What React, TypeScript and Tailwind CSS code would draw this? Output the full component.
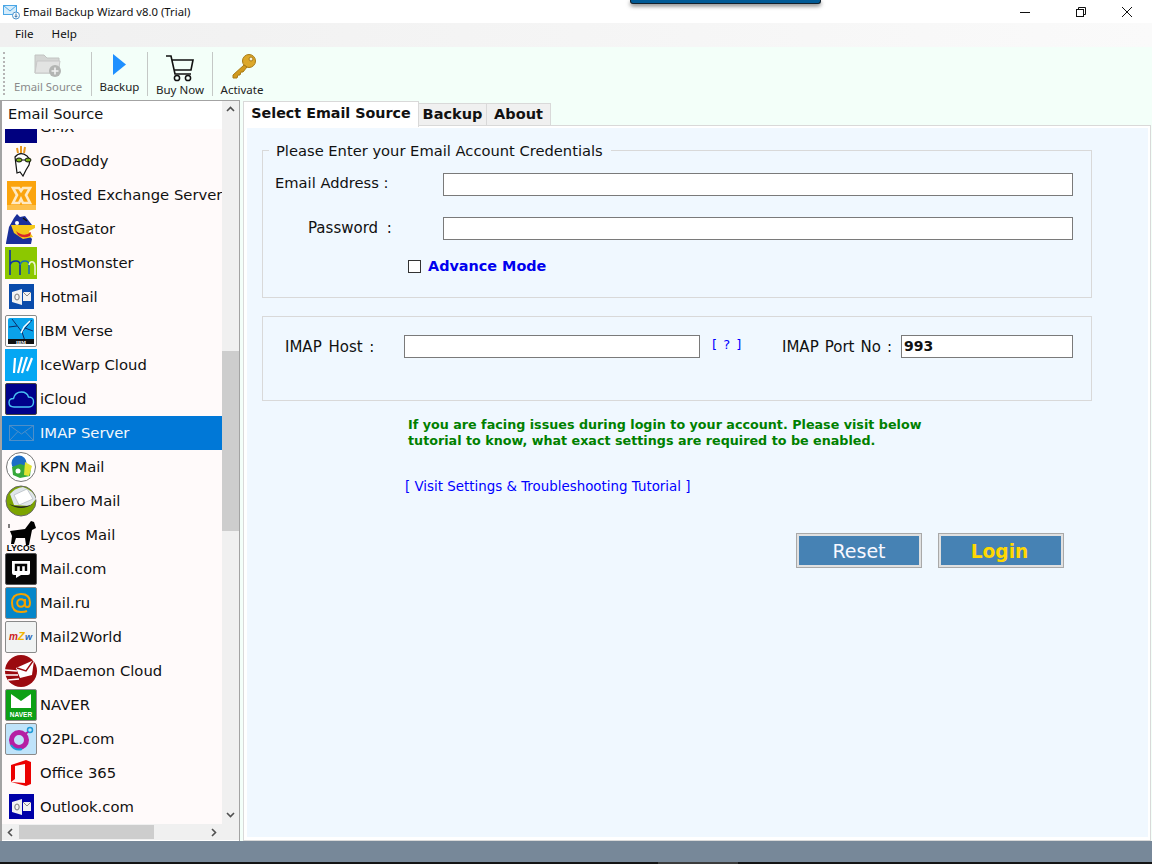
import React from "react";

const Box = ({ bg, children, border }: { bg: string; children?: React.ReactNode; border?: string }) => (
  <svg width="32" height="32" viewBox="0 0 32 32" className="block">
    <rect x="0.5" y="0.5" width="31" height="31" rx="1.5" fill={bg} stroke={border || "#8a8a8a"} />
    {children}
  </svg>
);
const Plain = ({ children }: { children?: React.ReactNode }) => (
  <svg width="32" height="32" viewBox="0 0 32 32" className="block">{children}</svg>
);
const OutlookIcon = ({ bg }: { bg: string }) => (
  <Plain>
    <rect x="4" y="3" width="25" height="25" fill={bg} />
    <path d="M7 11 L17 8 V24 L7 21Z" fill="#f2f2f2" />
    <path d="M18 11 H26 V20 H18Z" fill="#f2f2f2" />
    <path d="M18 11 L22 15 L26 11" fill="none" stroke="#8a8a8a" />
    <ellipse cx="12" cy="16" rx="2.2" ry="3" fill="none" stroke="#777" />
  </Plain>
);

const icons: Record<string, React.ReactNode> = {
  GMX: <Plain><rect x="0" y="0" width="32" height="32" fill="#00007f" /></Plain>,
  GoDaddy: (
    <Plain>
      <path d="M12 3 l1 5 M16 1 l0 7 M20 2 l-1 6" stroke="#e8971f" strokeWidth="2" fill="none" />
      <path d="M10 12 Q15 6 22 11 L25 15 L24 20 L21 25 L18 31 L15 27 L12 28 Q11 20 10 12Z" fill="#fff" stroke="#111" strokeWidth="1.2" />
      <ellipse cx="14" cy="15" rx="3" ry="2" fill="#7fb51d" stroke="#111" />
      <ellipse cx="23" cy="15" rx="3" ry="2" fill="#7fb51d" stroke="#111" />
      <path d="M17 15 H20" stroke="#111" />
    </Plain>
  ),
  Hosted: (
    <Plain>
      <rect x="2" y="2" width="29" height="29" fill="#fba40e" />
      <rect x="2" y="26" width="29" height="5" fill="#fdc04c" />
      <path d="M8 9 L14 9 L16 12 L18 9 L25 9 L21 16 L25 24 L18 24 L16 20 L14 24 L8 24 L12 16Z" fill="none" stroke="#ffe9c2" strokeWidth="2.6" />
    </Plain>
  ),
  HostGator: (
    <Plain>
      <path d="M1 30 L4 14 L9 5 L12 1 L15 4 L20 3 L27 12 L22 20 L27 26 L26 31 L1 31Z" fill="#1a2f9a" />
      <path d="M6 12 L30 12 L30 15 L24 18 L28 24 L18 26 L9 20Z" fill="#f4c81a" />
      <path d="M11 18 Q19 25 26 19 L25 23 Q18 26 13 22Z" fill="#d8262c" />
      <circle cx="12" cy="10" r="2" fill="#fff" />
      <path d="M18 5 L22 8" stroke="#111" strokeWidth="1.5" />
    </Plain>
  ),
  HostMonster: (
    <svg width="32" height="32" viewBox="0 0 32 32" className="block">
      <rect width="32" height="32" fill="#8cc800" />
      <path d="M5 3 V28 M5 18 Q6 14 11 14 Q15 14 15 18 V28" stroke="#0b2fa8" strokeWidth="1.6" fill="none" />
      <path d="M15 18 Q16 14 20 14 Q24 14 24 18 V27 M15 28 H15" stroke="#1c6fb5" strokeWidth="1.6" fill="none" />
      <path d="M24 18 Q25 14 28 15 Q30 16 30 20 V28" stroke="#eaf5cf" strokeWidth="1.6" fill="none" />
    </svg>
  ),
  Hotmail: <OutlookIcon bg="#0a4bab" />,
  IBM: (
    <Box bg="#fff">
      <rect x="3" y="3" width="26" height="26" rx="2" fill="#0aa2ea" />
      <path d="M7 4 L17 17 L21 29 M17 17 L27 5 M4 12 L12 11 M20 13 L28 16" stroke="#0d2a66" strokeWidth="1" fill="none" />
      <path d="M16 18 L19 12 L25 6" stroke="#fff" strokeWidth="1.4" fill="none" />
      <rect x="3" y="24" width="26" height="5" fill="#111" />
      <text x="16" y="28.5" fontSize="5" fill="#fff" textAnchor="middle" fontWeight="bold" fontFamily="Liberation Serif, serif">IBM</text>
    </Box>
  ),
  IceWarp: (
    <svg width="32" height="32" viewBox="0 0 32 32" className="block">
      <rect width="32" height="32" fill="#05a7f3" />
      <path d="M10 9 L9 24 M17 8 L13 24 M22 8 L17 24 M27 9 L22 22" stroke="#fff" strokeWidth="2.2" fill="none" />
    </svg>
  ),
  iCloud: (
    <Box bg="#00008b" border="#444">
      <path d="M9 24 Q4 24 4 19.5 Q4 15.5 8.5 15.5 Q10 9 16.5 9 Q22 9 23.5 14 Q29 14 28.5 19.5 Q28 24 24 24Z" fill="none" stroke="#49c1f3" strokeWidth="1.4" />
    </Box>
  ),
  IMAP: (
    <Plain>
      <rect x="4.5" y="8.5" width="24" height="15" fill="none" stroke="#4d8fc9" />
      <path d="M4.5 8.5 L16.5 17 L28.5 8.5 M4.5 23.5 L13 14.5 M28.5 23.5 L20 14.5" fill="none" stroke="#4d8fc9" />
    </Plain>
  ),
  KPN: (
    <Plain>
      <circle cx="16" cy="16" r="14.5" fill="#fff" stroke="#777" />
      <circle cx="14" cy="12" r="7.5" fill="#1c6ec7" />
      <path d="M7 16 L15 13 L26 16 L25 25 L15 27 L8 24Z" fill="#36a93a" />
      <path d="M20 11 L27 15 L24 25 L19 24Z" fill="#dfe334" />
      <circle cx="13" cy="20" r="2.5" fill="#fff" />
    </Plain>
  ),
  Libero: (
    <Plain>
      <circle cx="16" cy="16" r="15" fill="#7ca400" stroke="#666" />
      <path d="M5 9 Q10 3 18 2 Q28 5 31 14 L25 21 L9 20Z" fill="#dfe5ea" />
      <path d="M9 10 L22 4 L28 14 L14 20Z" fill="#fff" stroke="#a8afb5" strokeWidth="0.6" />
      <path d="M4 19 Q16 24 28 19 Q16 27 4 19Z" fill="#222" />
    </Plain>
  ),
  Lycos: (
    <Plain>
      <path d="M5 12 L20 10 L26 2 L29 3 L31 9 L27 11 L25 21 L24 26 L21 26 L20 19 L11 19 L9 25 L6 25 L7 17 L5 12Z" fill="#000" />
      <path d="M4 5 L4 9" stroke="#000" />
      <text x="16" y="31.5" fontSize="8.5" fontWeight="bold" textAnchor="middle" fill="#000" fontFamily="Liberation Sans, sans-serif">LYCOS</text>
    </Plain>
  ),
  MailCom: (
    <Box bg="#060606" border="#555">
      <path d="M7 8 H25 V20 Q25 22 23 22 L16 22 L11 25 V22 H9 Q7 22 7 20Z" fill="#fff" />
      <path d="M11 18 V12 H21 V18 M16 12 V18" stroke="#060606" strokeWidth="2.4" fill="none" />
    </Box>
  ),
  MailRu: (
    <Box bg="#0586c9">
      <circle cx="16" cy="16" r="3.8" fill="none" stroke="#f5a300" strokeWidth="2" />
      <path d="M20 12 V18 Q20 20 22.5 20 Q25 20 25 15.5 Q25 7 16 7 Q7 7 7 16 Q7 25 16 25 Q20 25 22 24" fill="none" stroke="#f5a300" strokeWidth="2" />
    </Box>
  ),
  Mail2World: (
    <Box bg="#f1f3f3">
      <text x="4" y="19" fontSize="10" fontStyle="italic" fontWeight="bold" fill="#cc1d1d" fontFamily="Liberation Sans, sans-serif">m</text>
      <text x="13" y="19" fontSize="11" fontStyle="italic" fontWeight="bold" fill="#f0b400" fontFamily="Liberation Sans, sans-serif">Z</text>
      <text x="20" y="19" fontSize="9" fontStyle="italic" fontWeight="bold" fill="#2164b8" fontFamily="Liberation Sans, sans-serif">w</text>
    </Box>
  ),
  MDaemon: (
    <Plain>
      <circle cx="16" cy="16" r="16" fill="#9b0a0f" />
      <path d="M11 13 L29 5 L27 20 L15 23Z" fill="#fff" />
      <path d="M12 13 L21 16 L28 6" fill="none" stroke="#9b0a0f" strokeWidth="1.4" />
      <path d="M0 15 L12 16 M0 20 L13 20 M3 25 L14 24" stroke="#fff" strokeWidth="1.6" />
    </Plain>
  ),
  NAVER: (
    <Box bg="#0da015">
      <rect x="6" y="5" width="20" height="14" fill="#fff" />
      <path d="M6 5 L16 12 L26 5Z" fill="#0da015" />
      <text x="16" y="27.5" fontSize="6.5" fontWeight="bold" fill="#fff" textAnchor="middle" fontFamily="Liberation Sans, sans-serif">NAVER</text>
    </Box>
  ),
  O2PL: (
    <Box bg="#bfe3fa">
      <circle cx="14" cy="17" r="7.5" fill="none" stroke="#b51fa3" strokeWidth="5" />
      <path d="M6 22 Q10 28 17 26" fill="none" stroke="#1e9ad6" strokeWidth="2" />
      <circle cx="25" cy="7" r="2.5" fill="none" stroke="#1e9ad6" strokeWidth="1.5" />
      <path d="M20 11 L23 9" stroke="#b51fa3" strokeWidth="2" />
    </Box>
  ),
  Office: (
    <Plain>
      <path d="M6 8 L21 3 L26 5 V27 L21 29 L6 25 L20 26 V7 L10 9 V22 L6 25Z" fill="#eb0000" />
    </Plain>
  ),
  Outlook: <OutlookIcon bg="#0000a8" />,
};

const rows: [string, string][] = [
  ["GMX", "GMX"], ["GoDaddy", "GoDaddy"], ["Hosted", "Hosted Exchange Server"], ["HostGator", "HostGator"],
  ["HostMonster", "HostMonster"], ["Hotmail", "Hotmail"], ["IBM", "IBM Verse"], ["IceWarp", "IceWarp Cloud"],
  ["iCloud", "iCloud"], ["IMAP", "IMAP Server"], ["KPN", "KPN Mail"], ["Libero", "Libero Mail"],
  ["Lycos", "Lycos Mail"], ["MailCom", "Mail.com"], ["MailRu", "Mail.ru"], ["Mail2World", "Mail2World"],
  ["MDaemon", "MDaemon Cloud"], ["NAVER", "NAVER"], ["O2PL", "O2PL.com"], ["Office", "Office 365"], ["Outlook", "Outlook.com"],
];

const Chevron = ({ d }: { d: string }) => (
  <svg width="9" height="9" viewBox="0 0 9 9" className="block">
    <path d={d} fill="none" stroke="#505050" strokeWidth="1.6" />
  </svg>
);

const ui = "font-['Noto_Sans','Open_Sans',sans-serif]";
const dv = "font-['DejaVu_Sans',Verdana,sans-serif]";

const Sep = () => <div className="w-px h-[44px] bg-[#c4c8c6] self-center" />;

export default function App() {
  return (
    <div className={`relative w-[1152px] h-[864px] overflow-hidden bg-white flex flex-col ${dv}`}>
      <div className="absolute left-[630px] top-0 w-[191px] h-[4px] bg-[#005a96] border-b border-x border-[#12202c] rounded-b-[3px] shadow-[0_2px_4px_rgba(0,0,0,0.55)]" />

      {/* title bar */}
      <div className="h-[23px] bg-white flex items-center shrink-0">
        <svg width="17" height="17" viewBox="0 0 17 17" className="ml-[3px] mt-[-1px]">
          <rect x="0.5" y="2.5" width="13" height="9" fill="#d5ecfb" stroke="#4aa6e6" />
          <path d="M0.5 2.5 L7 8 L13.5 2.5" fill="none" stroke="#4aa6e6" />
          <circle cx="13" cy="12.5" r="3.5" fill="#fff" stroke="#4a90c9" />
          <path d="M13 10.5 V14 M11.5 12.8 L13 14.3 L14.5 12.8" fill="none" stroke="#2b6ea8" />
        </svg>
        <span className={`ml-[3px] mt-[2px] text-[11.3px] text-[#111] ${ui}`}>Email Backup Wizard v8.0 (Trial)</span>
        <div className="ml-auto flex items-center">
          <svg width="12" height="12" viewBox="0 0 12 12" className="mr-[44px]"><path d="M1 6.5 H11" stroke="#111" /></svg>
          <svg width="12" height="12" viewBox="0 0 12 12" className="mr-[34px]">
            <rect x="1.5" y="3.5" width="7" height="7" fill="none" stroke="#111" />
            <path d="M3.5 3.5 V1.5 H10.5 V8.5 H8.5" fill="none" stroke="#111" />
          </svg>
          <svg width="12" height="12" viewBox="0 0 12 12" className="mr-[19px]"><path d="M1 1 L11 11 M11 1 L1 11" stroke="#111" /></svg>
        </div>
      </div>

      {/* menu */}
      <div className={`h-[24px] shrink-0 flex items-center pb-[2px] bg-gradient-to-r from-[#f0f0f0] to-[#fafafa] text-[11.6px] text-[#111] ${ui}`}>
        <span className="ml-[15px]">File</span>
        <span className="ml-[18px]">Help</span>
      </div>

      {/* toolbar */}
      <div className={`h-[53px] shrink-0 flex items-stretch bg-[#f3fff9] text-[11.5px] text-[#222] ${ui}`}>
        <div className="ml-[3px] w-[2px] my-[5px] border-l-2 border-dotted border-[#b5b5b5]" />
        <div className="w-[86px] flex flex-col items-center">
          <svg width="30" height="27" viewBox="0 0 30 27" className="mt-[5px] ml-[2px]">
            <path d="M1 3 H10 L13 6 H25 V21 H1Z" fill="#d4d6d4" stroke="#c2c4c2" />
            <path d="M1 21 L3 9 H26 L24 21Z" fill="#e2e3e2" stroke="#c8c8c8" />
            <circle cx="21" cy="19" r="6" fill="#b3b5b3" />
            <path d="M21 15.5 V22.5 M17.5 19 H24.5" stroke="#f2f2f2" strokeWidth="1.6" />
          </svg>
          <span className="text-[#8a8a8a] text-[11.3px] leading-none mt-[2px]">Email Source</span>
        </div>
        <Sep />
        <div className="w-[55px] flex flex-col items-center">
          <svg width="14" height="21" viewBox="0 0 14 21" className="mt-[7px]"><path d="M0 0 L13 10.5 L0 21Z" fill="#1e90ff" /></svg>
          <span className="leading-none mt-[6px]">Backup</span>
        </div>
        <Sep />
        <div className="w-[64px] flex flex-col items-center">
          <svg width="30" height="27" viewBox="0 0 30 27" className="mt-[8px]">
            <path d="M1 1 H6 L10 19 H26 M7 5 H28 L26 15 H9" fill="none" stroke="#111" strokeWidth="1.6" />
            <circle cx="12" cy="23" r="2.6" fill="none" stroke="#111" strokeWidth="1.5" />
            <circle cx="23" cy="23" r="2.6" fill="none" stroke="#111" strokeWidth="1.5" />
          </svg>
          <span className="leading-none mt-[2px]">Buy Now</span>
        </div>
        <Sep />
        <div className="w-[60px] flex flex-col items-center">
          <svg width="26" height="26" viewBox="0 0 26 26" className="mt-[6px] ml-[1px]">
            <circle cx="18" cy="8" r="6.5" fill="#dca82a" stroke="#a87a14" />
            <circle cx="20" cy="6" r="2" fill="#f6f0d8" stroke="#a87a14" />
            <path d="M13 12 L2 22 L2 25 L6 25 L7 22 L9 22 L10 19 L12 19 L16 14Z" fill="#d19a1e" stroke="#a87a14" />
          </svg>
          <span className="leading-none mt-[5px] -ml-[2px]">Activate</span>
        </div>
      </div>

      {/* main */}
      <div className="flex-1 min-h-0 flex bg-[#f3fff9]">
        {/* sidebar */}
        <div className="w-[240px] shrink-0 h-[741px] flex flex-col bg-white border-t border-l-2 border-r border-[#a3a3a3] pb-px">
          <div className="flex-1 min-h-0 flex">
            <div className="w-[220px] flex flex-col min-h-0">
              <div className="h-[28px] bg-white shrink-0 flex items-center pl-[6px] pb-[2px] text-[14.6px] text-[#111] z-10">Email Source</div>
              <div className="flex-1 min-h-0 overflow-hidden bg-[#fffafa]">
                <div className="-mt-[19px]">
                  {rows.map(([k, label]) => {
                    const sel = k === "IMAP";
                    return (
                      <div key={k} className={`h-[34px] flex items-center whitespace-nowrap overflow-hidden text-[14.8px] ${sel ? "bg-[#0078d7] text-[#f4f8fc]" : "text-[#111]"}`}>
                        <div className="w-[32px] ml-[3px] mr-[3px] shrink-0">{icons[k]}</div>
                        <span>{label}</span>
                      </div>
                    );
                  })}
                </div>
              </div>
            </div>
            <div className="flex-1 bg-[#f0f0f0] flex flex-col items-center">
              <div className="h-[17px] flex items-center justify-center"><Chevron d="M1 6 L4.5 2.5 L8 6" /></div>
              <div className="flex-1 w-full">
                <div className="mt-[233px] h-[180px] w-full bg-[#cdcdcd]" />
              </div>
              <div className="h-[20px] flex items-center justify-center"><Chevron d="M1 3 L4.5 6.5 L8 3" /></div>
            </div>
          </div>
          <div className="h-[16px] shrink-0 bg-[#f0f0f0] flex items-center">
            <div className="w-[17px] flex justify-center"><Chevron d="M6 1 L2.5 4.5 L6 8" /></div>
            <div className="w-[135px] h-[14px] bg-[#cdcdcd]" />
            <div className="ml-auto w-[30px] flex justify-start"><Chevron d="M3 1 L6.5 4.5 L3 8" /></div>
          </div>
        </div>

        {/* right */}
        <div className="flex-1 min-w-0 flex flex-col pl-[4px] pr-[2px]">
          <div className="h-[26px] shrink-0 flex items-end -ml-[1px] font-bold text-[14.5px] text-[#111]">
            <div className="w-[176px] h-[26px] bg-white border-x border-t border-[#d9d9d9] flex items-center justify-center pb-[2px] z-10 -mb-[1px] text-[14.3px]">Select Email Source</div>
            <div className="w-[68px] h-[23px] bg-[#f0f0f0] border-r border-t border-[#d9d9d9] flex items-center justify-center">Backup</div>
            <div className="w-[64px] h-[23px] bg-[#f0f0f0] border-r border-t border-[#d9d9d9] flex items-center justify-center">About</div>
          </div>
          <div className="h-[714px] bg-[#f0f8ff] border-l-[3px] border-t-[2px] border-r-[2px] border-b-[3px] border-white outline outline-1 outline-[#d9d9d9] text-[15px] text-[#111]">
            {/* group 1 */}
            <fieldset className="ml-[15px] mt-[12px] w-[830px] h-[158px] border border-[#d9d9d9] pl-[12px]">
              <legend className="-ml-[6px] pl-[7px] pr-[8px] pt-[2px] text-[14.7px] leading-[18px]">Please Enter your Email Account Credentials</legend>
              <div className="flex items-center h-[23px] mt-[13px]">
                <span className="w-[168px] shrink-0 -mt-[3px] text-[14.7px]">Email Address :</span>
                <div className="w-[630px] h-[23px] bg-white border border-[#7a7a7a]" />
              </div>
              <div className="flex items-center h-[23px] mt-[21px]">
                <span className="w-[168px] shrink-0 pl-[33px] -mt-[1px] [word-spacing:4px]">Password :</span>
                <div className="w-[630px] h-[23px] bg-white border border-[#7a7a7a]" />
              </div>
              <div className="flex items-center mt-[16px] ml-[133px]">
                <div className="w-[13px] h-[13px] border border-[#333] bg-white" />
                <span className="ml-[7px] font-bold text-[14.4px] text-[#0000ee]">Advance Mode</span>
              </div>
            </fieldset>

            {/* group 2 */}
            <div className="ml-[15px] mt-[18px] w-[830px] h-[85px] border border-[#d9d9d9] flex items-start pt-[18px]">
              <span className="ml-[22px] w-[119px] shrink-0 leading-[25px] [word-spacing:2px]">IMAP Host :</span>
              <div className="w-[296px] h-[23px] bg-white border border-[#7a7a7a] shrink-0" />
              <span className="ml-[12px] w-[70px] text-[13px] text-[#0000ff] leading-[20px] tracking-[1px]">[ ? ]</span>
              <span className="w-[119px] shrink-0 leading-[25px] [word-spacing:1.3px]">IMAP Port No :</span>
              <div className="w-[172px] h-[23px] bg-white border border-[#7a7a7a] shrink-0 text-[14px] font-bold text-[#111] pl-[2px] leading-[21px]">993</div>
            </div>

            <div className="ml-[161px] mt-[16px] text-[#008000] font-bold text-[12.73px] leading-[16px] whitespace-nowrap">
              <div>If you are facing issues during login to your account. Please visit below</div>
              <div>tutorial to know, what exact settings are required to be enabled.</div>
            </div>
            <div className="ml-[158px] mt-[29px] text-[#0000ff] text-[13.4px] leading-[18px]">[ Visit Settings &amp; Troubleshooting Tutorial ]</div>

            <div className="flex ml-[549px] mt-[37px] gap-[16px]">
              <div className="w-[126px] h-[35px] border border-[#a9a9a9] bg-[#e0e0e0] p-[2px]">
                <div className="w-full h-full bg-[#4682b4] text-[#f8f8ff] text-[19px] flex items-center justify-center pt-[2px]">Reset</div>
              </div>
              <div className="w-[126px] h-[35px] border border-[#a9a9a9] bg-[#e0e0e0] p-[2px]">
                <div className="w-full h-full bg-[#4682b4] text-[#ffd700] text-[18.6px] font-bold flex items-center justify-center pt-[2px] pr-[3px]">Login</div>
              </div>
            </div>
          </div>
        </div>
      </div>

      {/* bottom */}
      <div className="h-[21px] shrink-0 bg-[#778899]" />
      <div className="h-[2px] shrink-0 bg-[#141414] flex">
        <div className="ml-[658px] w-[80px] h-full bg-[#3c3c3c]" />
      </div>
    </div>
  );
}
